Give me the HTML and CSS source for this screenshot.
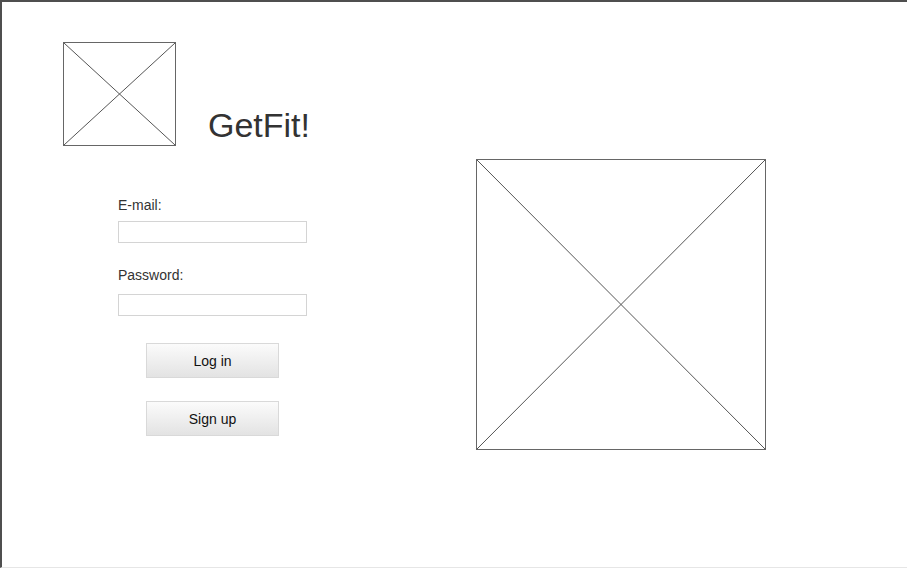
FILE: index.html
```html
<!DOCTYPE html>
<html lang="en">
<head>
<meta charset="utf-8">
<title>GetFit!</title>
<link rel="stylesheet" href="styles.css">
</head>
<body>
<div class="frame">
  <div class="left">
    <div class="header">
      <div class="placeholder logo">
        <svg viewBox="0 0 100 100" preserveAspectRatio="none"><line x1="0" y1="0" x2="100" y2="100"/><line x1="100" y1="0" x2="0" y2="100"/></svg>
      </div>
      <h1 class="title">GetFit!</h1>
    </div>
    <form class="form">
      <label class="label">E-mail:</label>
      <div class="input"></div>
      <label class="label label-second">Password:</label>
      <div class="input"></div>
      <div class="buttons">
        <div class="btn">Log in</div>
        <div class="btn">Sign up</div>
      </div>
    </form>
  </div>
  <div class="placeholder hero">
    <svg viewBox="0 0 100 100" preserveAspectRatio="none"><line x1="0" y1="0" x2="100" y2="100"/><line x1="100" y1="0" x2="0" y2="100"/></svg>
  </div>
</div>
</body>
</html>
```

FILE: styles.css
```css
* { box-sizing: border-box; }
html, body { margin: 0; padding: 0; background: #fff; }
body { font-family: "Liberation Sans", Arial, sans-serif; color: #333; }

.frame {
  width: 907px;
  height: 568px;
  border-top: 2px solid #4f4f4f;
  border-left: 2px solid #4f4f4f;
  border-bottom: 1px solid #e6e6e6;
  display: flex;
  align-items: flex-start;
  padding: 40px 0 0 61px;
}

.left { width: 413px; flex: none; }

.header { display: flex; align-items: flex-start; }

.placeholder { border: 1px solid #666; position: relative; flex: none; }
.placeholder svg { display: block; width: 100%; height: 100%; }
.placeholder line { stroke: #555; stroke-width: 1; vector-effect: non-scaling-stroke; }

.logo { width: 113px; height: 104px; }

.title {
  margin: 66px 0 0 32px;
  font-size: 34px;
  line-height: 34px;
  font-weight: normal;
  color: #333;
}

.form { margin: 0 0 0 55px; padding-top: 51px; display: flex; flex-direction: column; width: 189px; }

.label { display: block; font-size: 14px; line-height: 16px; color: #333; margin-bottom: 8px; }
.label-second { margin-top: 24px; margin-bottom: 11px; }

.input { width: 189px; height: 22px; border: 1px solid #d4d4d4; background: #fff; }

.buttons { display: flex; flex-direction: column; gap: 23px; margin: 27px 0 0 28px; }

.btn {
  width: 133px;
  height: 35px;
  border: 1px solid #d9d9d9;
  background: linear-gradient(#fbfbfb, #e3e3e3);
  display: flex;
  align-items: center;
  justify-content: center;
  font-size: 14px;
  color: #111;
}

.hero { width: 290px; height: 291px; margin-top: 117px; }
```
